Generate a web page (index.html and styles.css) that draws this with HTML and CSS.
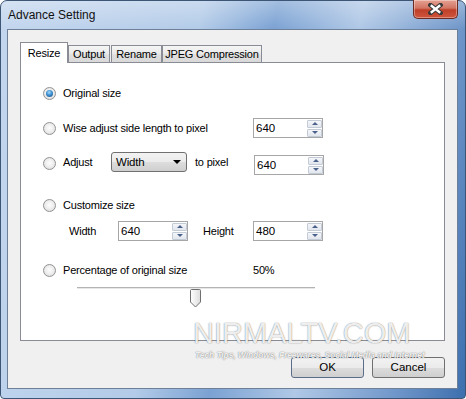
FILE: index.html
```html
<!DOCTYPE html>
<html lang="en">
<head>
  <meta charset="UTF-8" />
  <title>Advance Setting</title>
  <link rel="stylesheet" href="styles.css">
</head>
<body>
  <div class="window">
    <div class="titlebar">
      <span class="title">Advance Setting</span>
      <div class="close">
        <svg width="15" height="12" viewBox="0 0 15 12">
          <path d="M2.5 2 L12.5 10 M12.5 2 L2.5 10" stroke="#3a3a3a" stroke-width="4.5" stroke-linecap="square" />
          <path d="M2.8 2.3 L12.2 9.7 M12.2 2.3 L2.8 9.7" stroke="#fff" stroke-width="2.4" />
        </svg>
      </div>
    </div>

    <div class="client">
      <div class="tabs">
        <div class="tab active t-resize">Resize</div>
        <div class="tab t-output">Output</div>
        <div class="tab t-rename">Rename</div>
        <div class="tab t-jpeg">JPEG Compression</div>
      </div>

      <div class="panel">
        <div class="row r1">
          <span class="radio checked"></span>
          <span class="label">Original size</span>
        </div>

        <div class="row r2">
          <span class="radio"></span>
          <span class="label wide">Wise adjust side length to pixel</span>
          <div class="spin"><span class="val">640</span><span class="arrows"><span class="up"></span><span class="down"></span></span></div>
        </div>

        <div class="row r3">
          <span class="radio"></span>
          <span class="label adjust">Adjust</span>
          <div class="combo"><span>Width</span><span class="caret"></span></div>
          <span class="label topixel">to pixel</span>
          <div class="spin"><span class="val">640</span><span class="arrows"><span class="up"></span><span class="down"></span></span></div>
        </div>

        <div class="row r4">
          <span class="radio"></span>
          <span class="label">Customize size</span>
        </div>

        <div class="row r5">
          <span class="label wlabel">Width</span>
          <div class="spin"><span class="val">640</span><span class="arrows"><span class="up"></span><span class="down"></span></span></div>
          <span class="label hlabel">Height</span>
          <div class="spin"><span class="val">480</span><span class="arrows"><span class="up"></span><span class="down"></span></span></div>
        </div>

        <div class="row r6">
          <span class="radio"></span>
          <span class="label wide">Percentage of original size</span>
          <span class="label">50%</span>
        </div>

        <div class="slider">
          <div class="track"></div>
          <svg class="thumb" width="11" height="19" viewBox="0 0 11 19">
            <defs>
              <linearGradient id="tg" x1="0" y1="0" x2="1" y2="0">
                <stop offset="0" stop-color="#ffffff" />
                <stop offset="1" stop-color="#dcdcdc" />
              </linearGradient>
            </defs>
            <path d="M0.5 1.5 Q0.5 0.5 1.5 0.5 H9.5 Q10.5 0.5 10.5 1.5 V13 L5.5 18 L0.5 13 Z" fill="url(#tg)" stroke="#6f6f6f" />
          </svg>
        </div>
      </div>

      <div class="buttons">
        <div class="btn default">OK</div>
        <div class="btn">Cancel</div>
      </div>

      <div class="watermark">
        <div class="wm-big">NIRMALTV.COM</div>
        <div class="wm-small">Tech Tips, Windows, Freewares, Social Media and Internet</div>
      </div>
    </div>
  </div>
</body>
</html>
```

FILE: styles.css
```css
body {
  margin: 0;
  width: 466px;
  height: 399px;
  overflow: hidden;
  font-family: 'Liberation Sans', Arial, sans-serif;
  font-size: 11px;
  letter-spacing: -0.2px;
  color: #000;
}
.window {
  box-sizing: border-box;
  width: 466px;
  height: 399px;
  border: 1px solid #3d5676;
  border-radius: 7px 7px 4px 4px;
  padding: 0 7px 9px 6px;
  display: flex;
  flex-direction: column;
  background:
    linear-gradient(to bottom, rgba(255, 255, 255, 0.3), rgba(255, 255, 255, 0) 28px),
    linear-gradient(100deg, #c3d6ee 0%, #b3cbe8 38%, #7ba2d3 52%, #b0c8e6 68%, #7399cb 86%, #3d6fae 100%);
}
.titlebar {
  height: 28px;
  display: flex;
  justify-content: space-between;
  align-items: flex-start;
}
.title {
  margin: 6px 0 0 1px;
  font-size: 12px;
  line-height: 16px;
  letter-spacing: 0;
  color: #111;
}
.close {
  box-sizing: border-box;
  width: 45px;
  height: 19px;
  margin: -1px 0 0 0;
  border: 1px solid #6b2a22;
  border-top: none;
  border-radius: 0 0 5px 5px;
  background: linear-gradient(to bottom, #e6a192, #d27563 45%, #bf3f28 55%, #d0553c);
  box-shadow: inset 0 0 0 1px rgba(255, 255, 255, 0.35);
  display: flex;
  align-items: center;
  justify-content: center;
}
.client {
  flex: 1;
  position: relative;
  box-sizing: border-box;
  border: 1px solid #6d8098;
  background: #f0f0f0;
  padding: 12px 12px 10px;
  display: flex;
  flex-direction: column;
}
.tabs {
  display: flex;
  align-items: flex-end;
  height: 21px;
  margin-bottom: -1px;
  position: relative;
  z-index: 1;
}
.tab {
  box-sizing: border-box;
  height: 18px;
  border: 1px solid #898c95;
  background: linear-gradient(to bottom, #f5f5f5, #ebebeb 45%, #dfdfdf 55%, #d9d9d9);
  text-align: center;
  line-height: 16px;
}
.tab.active {
  height: 21px;
  background: #fff;
  border-bottom: none;
  line-height: 20px;
}
.t-resize { width: 48px; }
.t-output { width: 42px; }
.t-rename { width: 51px; margin-left: 1px; }
.t-jpeg { width: 100px; }
.panel {
  box-sizing: border-box;
  height: 279px;
  border: 1px solid #898c95;
  background: #fff;
  padding: 20px 0 0 22px;
}
.row {
  display: flex;
  align-items: center;
  height: 20px;
}
.r2 { margin-top: 15px; }
.r3 { margin-top: 14px; height: 23px; align-items: flex-start; }
.r3 .radio { margin-top: 5px; }
.r3 .label { line-height: 21px; }
.r3 .spin { margin-top: 3px; }
.r4 { margin-top: 20px; }
.r5 { margin-top: 6px; }
.r6 { margin-top: 19px; }
.radio {
  box-sizing: border-box;
  flex: none;
  width: 13px;
  height: 13px;
  margin-right: 7px;
  border-radius: 50%;
  border: 1px solid #929292;
  background: radial-gradient(circle at 50% 45%, #fdfdfd 0%, #efefef 45%, #d6d6d6 100%);
  display: flex;
  align-items: center;
  justify-content: center;
}
.radio.checked::after {
  content: '';
  width: 7px;
  height: 7px;
  border-radius: 50%;
  background: radial-gradient(circle at 45% 35%, #a6dcff 0%, #3d8fd0 45%, #16497e 100%);
}
.label.wide { width: 190px; }
.label.adjust { width: 48px; }
.label.topixel { width: 59px; margin-left: 8px; }
.label.wlabel { width: 49px; margin-left: 26px; }
.label.hlabel { width: 50px; margin-left: 15px; }
.spin {
  box-sizing: border-box;
  width: 70px;
  height: 20px;
  border: 1px solid #a6a6a6;
  background: #fff;
  display: flex;
  align-items: center;
  justify-content: space-between;
}
.spin .val {
  padding-left: 2px;
  font-size: 11.5px;
  letter-spacing: 0;
}
.arrows {
  display: flex;
  flex-direction: column;
  gap: 1px;
}
.arrows span {
  box-sizing: border-box;
  width: 15px;
  height: 8px;
  border: 1px solid #c3cbd6;
  border-radius: 1px;
  background: linear-gradient(to bottom, #f4f6f9, #e2e7ee);
  display: flex;
  align-items: center;
  justify-content: center;
}
.arrows .up::after,
.arrows .down::after {
  content: '';
  width: 0;
  height: 0;
  border-left: 3px solid transparent;
  border-right: 3px solid transparent;
}
.arrows .up::after { border-bottom: 3px solid #4a6189; }
.arrows .down::after { border-top: 3px solid #4a6189; }
.combo {
  box-sizing: border-box;
  width: 76px;
  height: 20px;
  border: 1px solid #707070;
  border-radius: 3px;
  background: linear-gradient(to bottom, #f2f2f2, #ebebeb 50%, #dddddd 50%, #cfcfcf);
  display: flex;
  align-items: center;
  justify-content: space-between;
  padding: 0 5px 0 4px;
  font-size: 11.5px;
}
.caret {
  width: 0;
  height: 0;
  border-left: 4px solid transparent;
  border-right: 4px solid transparent;
  border-top: 4px solid #000;
}
.slider {
  position: relative;
  margin: 5px 0 0 34px;
  width: 238px;
  height: 22px;
}
.track {
  margin-top: 7px;
  height: 1px;
  border-top: 1px solid #b4b4b4;
  background: #e8e8e8;
}
.thumb {
  position: absolute;
  left: 113px;
  top: 2px;
}
.buttons {
  display: flex;
  justify-content: flex-end;
  gap: 8px;
  margin-top: 16px;
}
.btn {
  box-sizing: border-box;
  width: 73px;
  height: 21px;
  border: 1px solid #707070;
  border-radius: 3px;
  background: linear-gradient(to bottom, #f2f2f2, #ebebeb 50%, #dddddd 50%, #cfcfcf);
  text-align: center;
  line-height: 19px;
  font-size: 11.5px;
  letter-spacing: 0;
}
.btn.default {
  border-color: #5a6e8a;
}
.watermark {
  position: absolute;
  left: 185px;
  top: 289px;
  z-index: 2;
  pointer-events: none;
  color: rgba(255, 255, 255, 0.9);
  text-shadow: 0 0 1px rgba(0, 0, 0, 0.5), 0 0 2px rgba(0, 0, 0, 0.15);
  letter-spacing: 0;
}
.wm-big {
  font-size: 29px;
  line-height: 29px;
}
.wm-small {
  margin: 2px 0 0 2px;
  font-size: 8.5px;
  font-weight: bold;
  font-style: italic;
  line-height: 10px;
  letter-spacing: -0.1px;
}
```
